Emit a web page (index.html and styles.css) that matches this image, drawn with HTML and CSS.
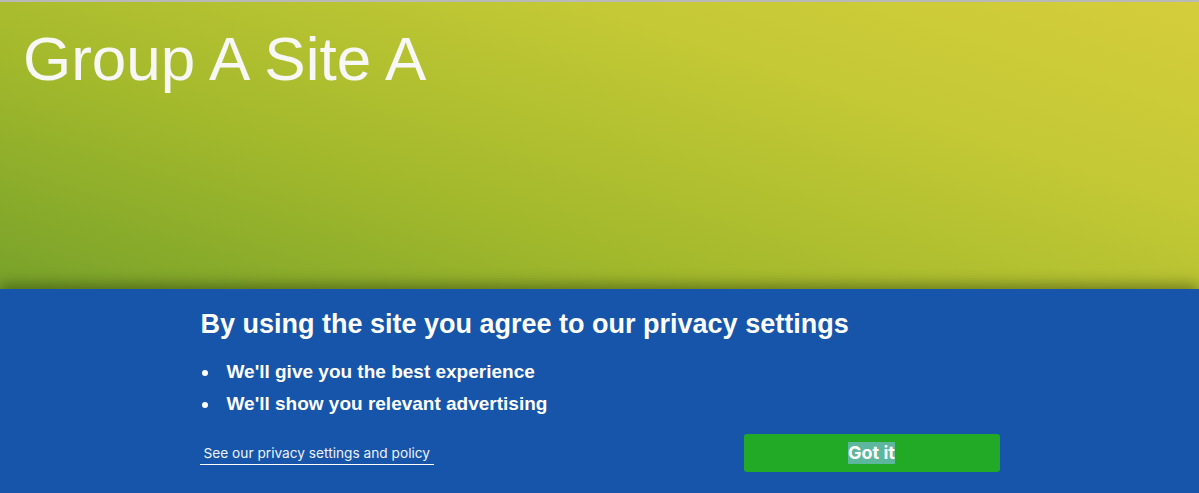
FILE: index.html
```html
<!DOCTYPE html>
<html>
<head>
<meta charset="utf-8">
<link rel="stylesheet" href="styles.css">
</head>
<body>
<div class="page">
  <header class="hero">
    <h1 class="title">Group A Site A</h1>
  </header>
  <section class="consent">
    <div class="consent-inner">
      <h2 class="consent-title">By using the site you agree to our privacy settings</h2>
      <ul class="consent-list">
        <li>We'll give you the best experience</li>
        <li>We'll show you relevant advertising</li>
      </ul>
      <div class="consent-actions">
        <a class="policy-link" href="#">See our privacy settings and policy</a>
        <button class="ok-btn"><span class="sel">Got it</span></button>
      </div>
    </div>
  </section>
</div>
</body>
</html>
```

FILE: styles.css
```css
html, body {
  margin: 0;
  padding: 0;
  height: 100%;
  overflow: hidden;
}
body {
  font-family: "Liberation Sans", Arial, sans-serif;
  background: #1655a9;
}
.page {
  display: flex;
  flex-direction: column;
  height: 493px;
  border-top: 2px solid #b9b9b7;
  box-sizing: border-box;
}
.hero {
  height: 287px;
  flex: none;
  background: linear-gradient(18deg, #78a22a 0%, #a3b92c 35%, #c4c935 70%, #d5cd3b 100%);
  padding: 21px 0 0 23px;
  box-sizing: border-box;
}
.title {
  margin: 0;
  font-weight: normal;
  font-size: 62px;
  line-height: 72px;
  color: #f7f7f5;
}
.consent {
  flex: 1;
  background: #1655a9;
  box-shadow: 0 -4px 14px rgba(20, 30, 0, 0.45);
  position: relative;
}
.consent-inner {
  width: 800px;
  margin: 0 auto;
  padding-top: 19px;
  color: #ffffff;
}
.consent-title {
  margin: 0 0 0 1px;
  font-size: 27px;
  line-height: 32px;
  font-weight: bold;
}
.consent-list {
  list-style: none;
  margin: 16px 0 0 0;
  padding: 0;
  font-size: 19px;
  font-weight: bold;
  line-height: 32px;
}
.consent-list li {
  display: flex;
  align-items: center;
}
.consent-list li::before {
  content: "";
  width: 6px;
  height: 6px;
  border-radius: 50%;
  background: #ffffff;
  margin: 1px 19px 0 2px;
  flex: none;
}
.consent-actions {
  display: flex;
  justify-content: space-between;
  align-items: flex-start;
  margin-top: 14px;
}
.policy-link {
  margin-top: 10px;
  font-family: Inter, "Noto Sans", sans-serif;
  font-size: 13.7px;
  line-height: 18px;
  color: #eef2fa;
  text-decoration: none;
  padding: 0 4px 2px 4px;
  border-bottom: 1px solid #ffffff;
}
.ok-btn {
  width: 256px;
  height: 38px;
  border: none;
  border-radius: 3px;
  background: #22aa26;
  color: #ffffff;
  font-family: Inter, "Noto Sans", sans-serif;
  font-weight: bold;
  font-size: 18px;
  padding: 0;
  display: flex;
  align-items: center;
  justify-content: center;
}
.sel {
  background: #5db79c;
  line-height: 22px;
  display: inline-block;
}
```
